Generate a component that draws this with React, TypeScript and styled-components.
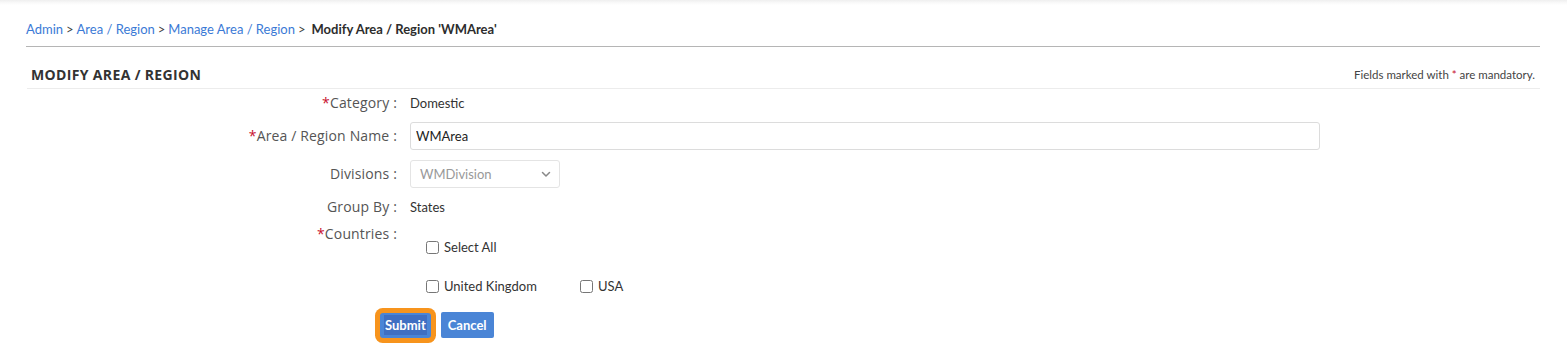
import React from "react";
import styled, { createGlobalStyle } from "styled-components";

const GlobalStyle = createGlobalStyle`
  html, body { margin: 0; padding: 0; background: #fff; }
  body {
    background: linear-gradient(#efefef 0, #fafafa 3px, #fff 5px) no-repeat;
    font-family: Lato, "Liberation Sans", sans-serif;
    color: #333;
  }
`;

const Page = styled.div`
  padding: 20px 27px 20px 26px;
`;

const Breadcrumb = styled.nav`
  font-family: Lato, "Liberation Sans", sans-serif;
  font-size: 13px;
  line-height: 18px;
  color: #333;
  padding-bottom: 8px;
  border-bottom: 1px solid #b5b5b5;
`;

const Crumb = styled.a`
  color: #3b7ad6;
  text-decoration: none;
`;

const Sep = styled.span`
  margin: 0 3px;
  color: #444;
`;

const Current = styled.strong`
  font-weight: 700;
  margin-left: 3px;
  color: #2d2d2d;
`;

const SectionHeader = styled.div`
  margin-top: 13px;
  margin-left: 1px;
  height: 28px;
  display: flex;
  align-items: center;
  justify-content: space-between;
  border-bottom: 1px solid #ececec;
  padding: 0 5px 0 4px;
`;

const Title = styled.h2`
  margin: 0;
  font-family: "Open Sans", "Liberation Sans", sans-serif;
  font-weight: 700;
  font-size: 14px;
  letter-spacing: 0.35px;
  color: #333;
`;

const Note = styled.span`
  font-family: Lato, "Liberation Sans", sans-serif;
  font-size: 11.5px;
  color: #444;
`;

const Star = styled.span`
  color: #c8102e;
`;

const Form = styled.form`
  display: flex;
  flex-direction: column;
  padding-top: 3px;
`;

const Row = styled.div<{ $h: number; $mt: number; $top?: boolean }>`
  display: grid;
  grid-template-columns: 371px 1fr;
  column-gap: 13px;
  align-items: ${(p) => (p.$top ? "start" : "center")};
  min-height: ${(p) => p.$h}px;
  margin-top: ${(p) => p.$mt}px;
`;

const Label = styled.label`
  text-align: right;
  font-family: "Open Sans", "Liberation Sans", sans-serif;
  font-size: 14px;
  letter-spacing: 0.15px;
  line-height: 18px;
  color: #555;
`;

const Value = styled.span`
  font-family: Lato, "Liberation Sans", sans-serif;
  font-size: 13px;
  color: #333;
`;

const TextInput = styled.input`
  box-sizing: border-box;
  width: 910px;
  height: 28px;
  border: 1px solid #dcdcdc;
  border-radius: 3px;
  padding: 0 5px;
  font-family: Lato, "Liberation Sans", sans-serif;
  font-size: 13px;
  color: #222;
  outline: none;
`;

const SelectBox = styled.div`
  box-sizing: border-box;
  width: 150px;
  height: 28px;
  border: 1px solid #e4e4e4;
  border-radius: 3px;
  padding: 0 8px 0 9px;
  display: flex;
  align-items: center;
  justify-content: space-between;
  font-family: Lato, "Liberation Sans", sans-serif;
  font-size: 13px;
  color: #999;
`;

const Checks = styled.div`
  display: flex;
  flex-direction: column;
  gap: 17px;
  padding: 11px 0 0 16px;
`;

const CheckLine = styled.div`
  display: flex;
  height: 22px;
  align-items: center;
`;

const Check = styled.label<{ $w?: number }>`
  display: inline-flex;
  align-items: center;
  width: ${(p) => (p.$w ? `${p.$w}px` : "auto")};
  font-family: Lato, "Liberation Sans", sans-serif;
  font-size: 13px;
  color: #333;
  input {
    margin: 0 5px 0 0;
    width: 13px;
    height: 13px;
  }
`;

const Buttons = styled.div`
  display: flex;
  gap: 10px;
  align-items: center;
  margin: 7px 0 0 354px;
`;

const Button = styled.button<{ $focus?: boolean }>`
  box-sizing: border-box;
  height: ${(p) => (p.$focus ? 25 : 26)}px;
  padding: ${(p) => (p.$focus ? "0 4px" : "0 7px")};
  border: none;
  background: #4a85d6;
  color: #fff;
  font-family: Lato, "Liberation Sans", sans-serif;
  font-weight: 700;
  font-size: 13px;
  box-shadow: ${(p) => (p.$focus ? "0 0 0 5px #f7941d" : "none")};
  border-radius: ${(p) => (p.$focus ? "3px" : "2px")};
`;

const Selected = styled.span`
  background: #3f6fc2;
  padding: 2px 1px;
`;

const Chevron = () => (
  <svg width="10" height="7" viewBox="0 0 10 7" fill="none">
    <path d="M1.5 1.5 L5 5 L8.5 1.5" stroke="#888" strokeWidth="1.5" strokeLinecap="round" strokeLinejoin="round" />
  </svg>
);

export default function App() {
  return (
    <>
      <GlobalStyle />
      <Page>
        <Breadcrumb>
          <Crumb href="#">Admin</Crumb>
          <Sep>&gt;</Sep>
          <Crumb href="#">Area / Region</Crumb>
          <Sep>&gt;</Sep>
          <Crumb href="#">Manage Area / Region</Crumb>
          <Sep>&gt;</Sep>
          <Current>Modify Area / Region 'WMArea'</Current>
        </Breadcrumb>
        <SectionHeader>
          <Title>MODIFY AREA / REGION</Title>
          <Note>
            Fields marked with <Star>*</Star> are mandatory.
          </Note>
        </SectionHeader>
        <Form>
          <Row $h={22} $mt={0}>
            <Label>
              <Star>*</Star>Category :
            </Label>
            <Value>Domestic</Value>
          </Row>
          <Row $h={28} $mt={8}>
            <Label>
              <Star>*</Star>Area / Region Name :
            </Label>
            <TextInput defaultValue="WMArea" />
          </Row>
          <Row $h={28} $mt={10}>
            <Label>Divisions :</Label>
            <SelectBox>
              <span>WMDivision</span>
              <Chevron />
            </SelectBox>
          </Row>
          <Row $h={22} $mt={8}>
            <Label>Group By :</Label>
            <Value>States</Value>
          </Row>
          <Row $h={80} $mt={7} $top>
            <Label>
              <Star>*</Star>Countries :
            </Label>
            <Checks>
              <CheckLine>
                <Check>
                  <input type="checkbox" />
                  Select All
                </Check>
              </CheckLine>
              <CheckLine>
                <Check $w={154}>
                  <input type="checkbox" />
                  United Kingdom
                </Check>
                <Check>
                  <input type="checkbox" />
                  USA
                </Check>
              </CheckLine>
            </Checks>
          </Row>
          <Buttons>
            <Button type="button" $focus>
              <Selected>Submit</Selected>
            </Button>
            <Button type="button">Cancel</Button>
          </Buttons>
        </Form>
      </Page>
    </>
  );
}
